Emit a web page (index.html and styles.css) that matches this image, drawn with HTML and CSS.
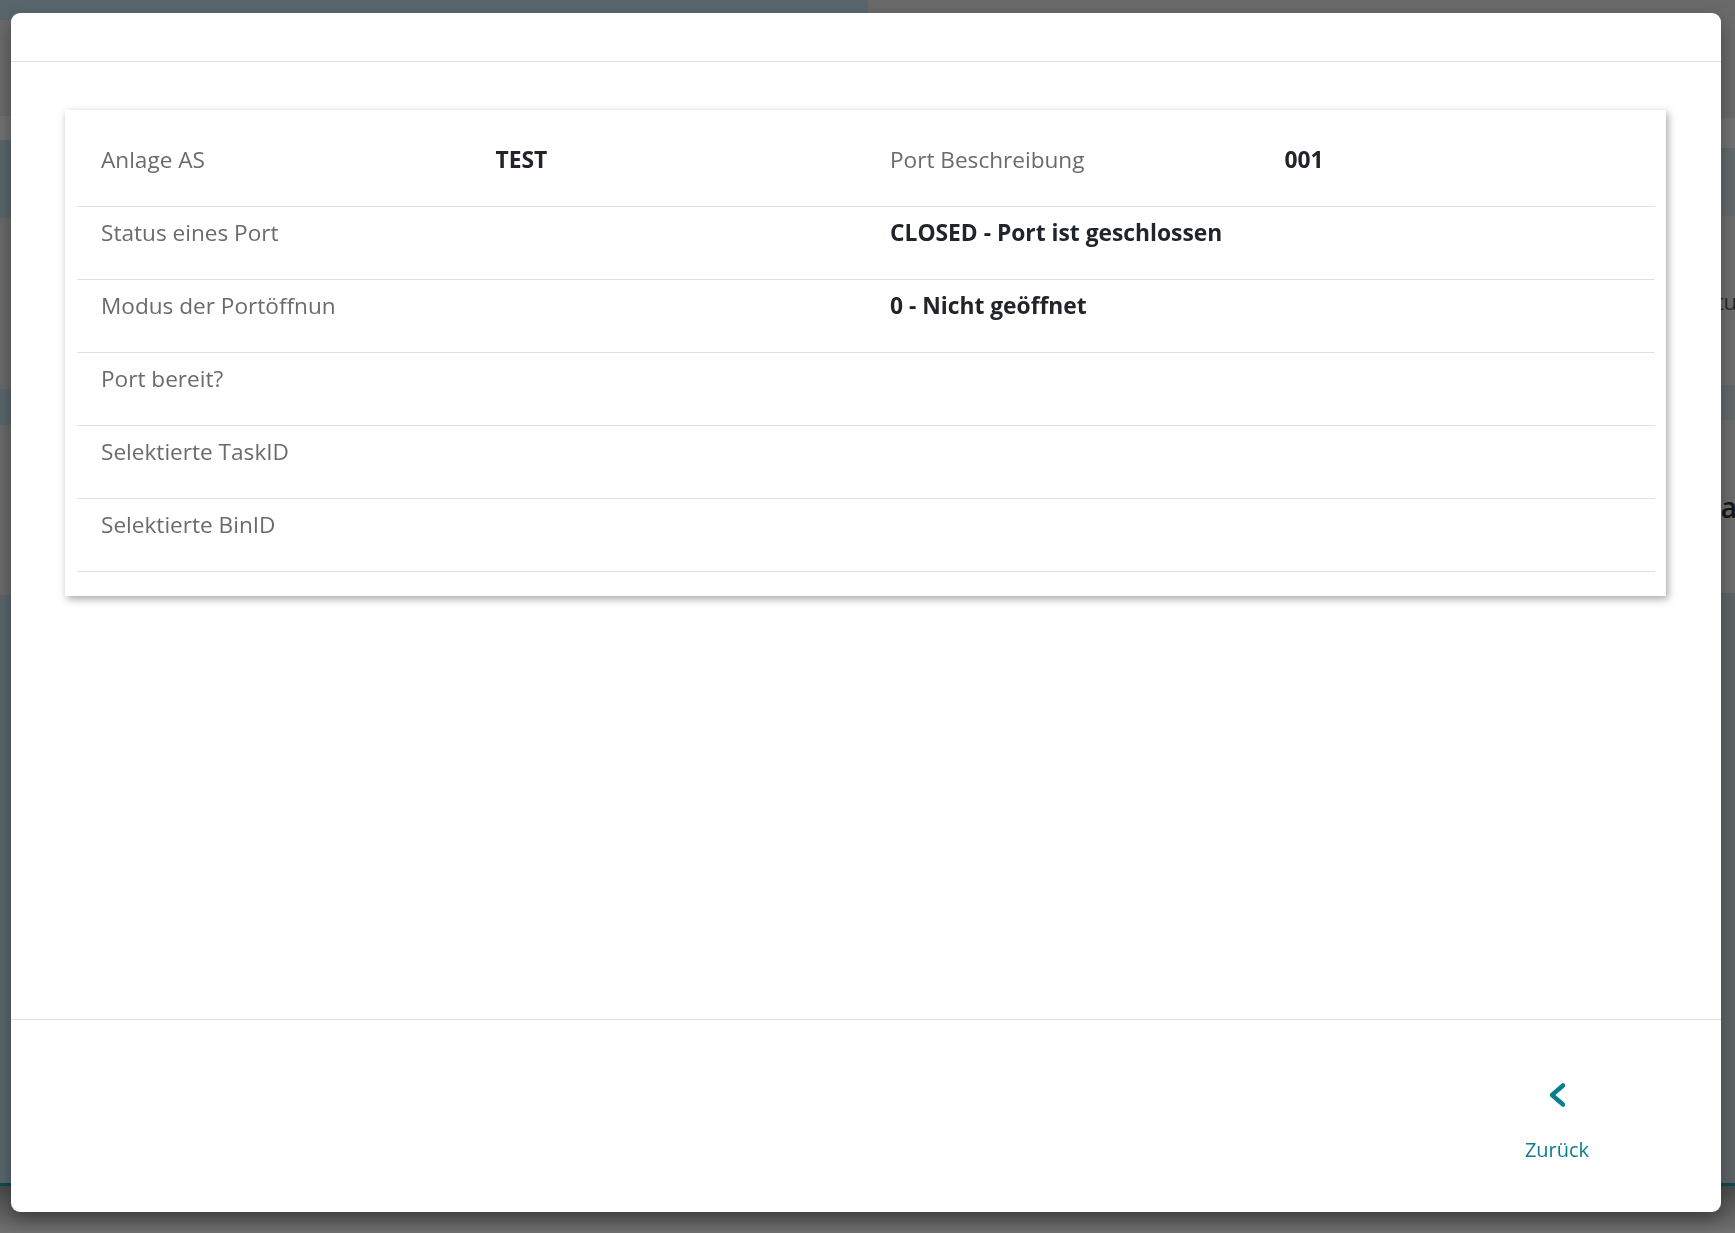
FILE: index.html
```html
<!DOCTYPE html>
<html lang="de">
<head>
    <meta charset="UTF-8">
    <meta name="viewport" content="width=device-width, initial-scale=1.0">
    <title>Port Details</title>
    <link rel="stylesheet" href="styles.css">
</head>
<body>
    <!-- Seite hinter dem Dialog (abgedunkelt) -->
    <div class="backdrop">
        <div class="bg-col">
            <div class="band blue" style="height: 20px"></div>
            <div class="band grey" style="height: 96px"></div>
            <div class="band light" style="height: 24px"></div>
            <div class="band blue" style="height: 78px"></div>
            <div class="band grey" style="height: 171px"></div>
            <div class="band blue" style="height: 36px"></div>
            <div class="band grey" style="height: 170px"></div>
            <div class="band blue" style="height: 588px"></div>
            <div class="band line"></div>
            <div class="band bottom"></div>
        </div>
        <div class="bg-col">
            <div class="band grey" style="height: 118px"></div>
            <div class="band light" style="height: 30px"></div>
            <div class="band dark" style="height: 68px"></div>
            <div class="band card" style="height: 169px"><span class="bg-text">tu</span></div>
            <div class="band dark" style="height: 35px"></div>
            <div class="band card" style="height: 173px"><span class="bg-text big">a</span></div>
            <div class="band dark2" style="height: 590px"></div>
            <div class="band line"></div>
            <div class="band bottom"></div>
        </div>
    </div>

    <div class="modal">
        <div class="modal-header"></div>
        <div class="modal-body">
            <div class="detail-card">
                <div class="row">
                    <div class="cell label">Anlage AS</div>
                    <div class="cell value">TEST</div>
                    <div class="cell label">Port Beschreibung</div>
                    <div class="cell value">001</div>
                </div>
                <div class="row">
                    <div class="cell label wide">Status eines Port</div>
                    <div class="cell value wide">CLOSED - Port ist geschlossen</div>
                </div>
                <div class="row">
                    <div class="cell label wide">Modus der Portöffnun</div>
                    <div class="cell value wide">0 - Nicht geöffnet</div>
                </div>
                <div class="row">
                    <div class="cell label wide">Port bereit?</div>
                    <div class="cell value wide"></div>
                </div>
                <div class="row">
                    <div class="cell label wide">Selektierte TaskID</div>
                    <div class="cell value wide"></div>
                </div>
                <div class="row">
                    <div class="cell label wide">Selektierte BinID</div>
                    <div class="cell value wide"></div>
                </div>
            </div>
        </div>
        <div class="modal-footer">
            <button class="back-button">
                <svg width="20" height="28" viewBox="0 0 20 28">
                    <polyline points="16,4.5 5,14 16,23.5" fill="none" stroke="currentColor" stroke-width="4.5" stroke-linecap="round" stroke-linejoin="round"/>
                </svg>
                <span>Zurück</span>
            </button>
        </div>
    </div>
</body>
</html>
```

FILE: styles.css
```css
* {
    margin: 0;
    padding: 0;
    box-sizing: border-box;
    font-family: 'Open Sans', 'Noto Sans', sans-serif;
}

body {
    width: 1735px;
    height: 1233px;
    overflow: hidden;
    background: #5a666b;
}

/* Hintergrund */
.backdrop {
    display: flex;
    justify-content: space-between;
    height: 100%;
}

.bg-col {
    width: 50%;
    display: flex;
    flex-direction: column;
}

.band.blue {
    background: #59676d;
}

.band.grey {
    background: #6a6a6a;
}

.band.light {
    background: #727272;
}

.band.dark {
    background: #63696b;
}

.band.dark2 {
    background: #5e6466;
}

.band.card {
    background: #6d6d6d;
    display: flex;
    justify-content: flex-end;
    align-items: center;
}

.band.line {
    height: 3px;
    background: #0d4a52;
}

.band.bottom {
    flex: 1;
    background: linear-gradient(#4a4a4a, #717171);
}

.bg-text {
    color: #2a2a2a;
    font-size: 22px;
    margin-right: -2px;
}

.bg-text.big {
    font-size: 28px;
    font-weight: 600;
    color: #151515;
}

/* Dialog */
.modal {
    position: fixed;
    left: 11px;
    top: 13px;
    width: 1710px;
    height: 1199px;
    background: #fff;
    border-radius: 9px;
    box-shadow: 0 8px 18px rgba(0, 0, 0, 0.35);
    display: flex;
    flex-direction: column;
}

.modal-header {
    height: 49px;
    border-bottom: 1px solid #e1e1e4;
}

.modal-body {
    flex: 1;
    padding: 48px 55px 0 54px;
}

.detail-card {
    background: #fff;
    padding: 24px 11px 24px 12px;
    box-shadow: 2px 3px 8px rgba(0, 0, 0, 0.35);
}

.row {
    display: grid;
    grid-template-columns: repeat(4, 1fr);
    height: 73px;
    border-bottom: 1px solid #e1e1e4;
}

.cell {
    padding: 7px 0 0 24px;
    font-size: 22.6px;
    line-height: 38px;
    white-space: nowrap;
}

.cell.wide {
    grid-column: span 2;
}

.label {
    color: #6b6b6b;
}

.value {
    color: #212529;
    font-size: 22.8px;
    font-weight: 700;
}

.modal-footer {
    height: 193px;
    border-top: 1px solid #e1e1e4;
    display: flex;
    justify-content: flex-end;
    padding: 61px 104px 0 0;
}

.back-button {
    width: 120px;
    height: 100px;
    background: none;
    border: none;
    color: #0b7e8b;
    display: flex;
    flex-direction: column;
    align-items: center;
    gap: 27px;
    font-size: 20px;
    cursor: pointer;
}
```
